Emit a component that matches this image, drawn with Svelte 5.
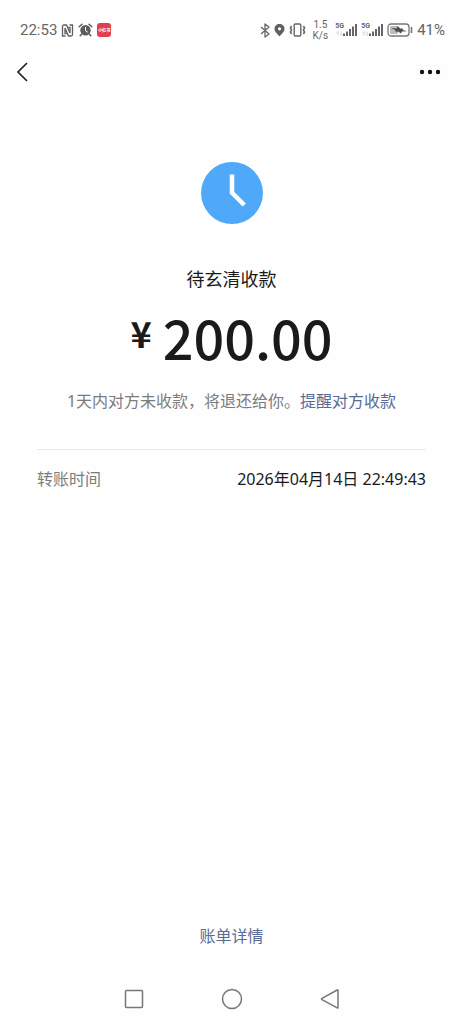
<script>
  const amount = '200.00';
  const time = '2026年04月14日 22:49:43';
</script>

{#snippet signal()}
  <span class="signal">
    <span class="gen">5G</span>
    <svg width="22" height="14" viewBox="0 0 22 14" aria-hidden="true">
      <path d="M3 8.500v4M1.500 10L3 8.500M6 8.500v4L7.500 11" stroke="#d0d0d0" stroke-width="1" fill="none" />
      <path d="M9 10.500V13M12 8.500V13M15 6v7M18 3.500V13M21 1v12" stroke="#666" stroke-width="2" fill="none" />
    </svg>
  </span>
{/snippet}

<div class="screen">
  <header class="status">
    <div class="group left">
      <span class="clock">22:53</span>
      <svg width="13" height="13" viewBox="0 0 13 13" aria-label="NFC">
        <path d="M4.500 12H1.500V2.500q0-1.500 1.500-1.500h2.500L9 9V3.500H7.500M8.500 1h3v9.500q0 1.500-1.500 1.500H7.500L4 4v5.500h1.500" fill="none" stroke="#606060" stroke-width="1.300" />
      </svg>
      <svg width="15" height="14" viewBox="0 0 15 14" aria-label="闹钟">
        <path d="M1.200 3.800L4 1.200M13.800 3.800L11 1.200M3.800 11L2.200 12.800M11.200 11l1.600 1.800" stroke="#5c5c5c" stroke-width="1.500" stroke-linecap="round" />
        <circle cx="7.500" cy="7.200" r="5.200" fill="#5c5c5c" />
        <path d="M7.500 4v3.700l2.300 1.500" fill="none" stroke="#fff" stroke-width="1" />
      </svg>
      <span class="app">小红书</span>
    </div>
    <div class="group right">
      <svg width="10" height="15" viewBox="0 0 10 15" aria-label="蓝牙">
        <path d="M1 4l8 7-4 3V1l4 3-8 7" fill="none" stroke="#666" stroke-width="1.300" stroke-linejoin="round" />
      </svg>
      <svg width="11" height="14" viewBox="0 0 11 14" aria-label="定位">
        <path fill-rule="evenodd" d="M5.500 1C2.700 1 .5 3.100.5 5.800.5 9 3.500 11 5.500 13.500 7.500 11 10.500 9 10.500 5.800 10.500 3.100 8.300 1 5.500 1zm0 3.200a1.600 1.600 0 1 1 0 3.200 1.600 1.600 0 0 1 0-3.200z" fill="#606060" />
      </svg>
      <svg width="17" height="14" viewBox="0 0 17 14" aria-label="振动">
        <rect x="5.200" y="1" width="6.600" height="12" rx="1.200" fill="none" stroke="#666" stroke-width="1.400" />
        <path d="M2.600 3L1.400 5l1.200 2-1.200 2 1.200 2M14.400 3l1.200 2-1.200 2 1.200 2-1.200 2" fill="none" stroke="#666" stroke-width="1.500" />
      </svg>
      <span class="speed"><span>1.5</span><span>K/s</span></span>
      {@render signal()}
      {@render signal()}
      <svg class="battery" width="26" height="14" viewBox="0 0 26 14" aria-label="电量">
        <rect x="1" y="1" width="21" height="12" rx="3" fill="none" stroke="#777" stroke-width="1.300" />
        <rect x="3" y="3" width="8" height="8" rx="1" fill="#bcbcbc" />
        <path d="M4 5l5.500.6L10.500 3l3 2.800 1.500-.8 1 2 4 1.200-5 .2-1 2-3-2-2 .7-1-2z" fill="#4e4e4e" />
        <path d="M24.500 4v6" stroke="#777" stroke-width="1.600" />
      </svg>
      <span class="percent">41%</span>
    </div>
  </header>

  <nav class="top">
    <button aria-label="返回">
      <svg width="14" height="22" viewBox="0 0 14 22"><path d="M12 2L3 11l9 9" fill="none" stroke="#222" stroke-width="1.700" /></svg>
    </button>
    <button aria-label="更多">
      <svg width="22" height="6" viewBox="0 0 22 6" fill="#111"><circle cx="3" cy="3" r="2.200" /><circle cx="11" cy="3" r="2.200" /><circle cx="19" cy="3" r="2.200" /></svg>
    </button>
  </nav>

  <main>
    <svg class="pending" width="62" height="62" viewBox="0 0 62 62" aria-hidden="true">
      <circle cx="31" cy="31" r="31" fill="#50a9f8" />
      <path d="M31 12.500v18.300L43.300 43" fill="none" stroke="#fff" stroke-width="4.500" />
    </svg>
    <h1>待玄清收款</h1>
    <p class="amount"><span class="yen">¥</span><span>{amount}</span></p>
    <p class="hint">1天内对方未收款，将退还给你。<a href="#remind">提醒对方收款</a></p>
    <dl>
      <dt>转账时间</dt>
      <dd>{time}</dd>
    </dl>
    <a class="bill" href="#bill">账单详情</a>
  </main>

  <footer>
    <button aria-label="最近任务">
      <svg width="22" height="22" viewBox="0 0 22 22"><rect x="2.500" y="2.500" width="17" height="17" rx="1" /></svg>
    </button>
    <button aria-label="主页">
      <svg width="22" height="22" viewBox="0 0 22 22"><circle cx="11" cy="11" r="9.500" /></svg>
    </button>
    <button aria-label="后退">
      <svg width="22" height="22" viewBox="0 0 22 22"><path d="M19 2.500v17q0 .8-.8.400L3 11.600q-.9-.6 0-1.200L18.200 2q.8-.3.800.5z" /></svg>
    </button>
  </footer>
</div>

<style>
  :global(body) {
    margin: 0;
    background: #fefefe;
  }

  .screen {
    display: flex;
    flex-direction: column;
    min-height: 100vh;
    color: #1a1a1a;
    font-family: "Noto Sans", "Noto Sans CJK SC", sans-serif;
    font-size: 16px;
    line-height: 24px;
  }

  svg {
    display: block;
    flex: none;
  }

  button {
    display: flex;
    padding: 0;
    border: 0;
    background: none;
    cursor: pointer;
  }

  a {
    color: #576b95;
    text-decoration: none;
  }

  h1,
  p,
  dl,
  dd {
    margin: 0;
  }

  .status {
    display: flex;
    justify-content: space-between;
    align-items: center;
    height: 60px;
    padding: 0 18px 0 20px;
    color: #666;
    font-family: Roboto, sans-serif;
  }

  .group {
    display: flex;
    align-items: center;
    gap: 4px;
  }

  .clock,
  .percent {
    font-size: 15px;
  }

  .app {
    width: 14px;
    border-radius: 3px;
    background: #e0404c;
    color: #fff;
    font-family: "Noto Sans CJK SC", sans-serif;
    font-size: 4px;
    font-weight: 700;
    line-height: 14px;
    text-align: center;
  }

  .speed {
    display: flex;
    flex-direction: column;
    align-items: center;
    margin: 0 3px;
    font-size: 10px;
    line-height: 11px;
  }

  .signal {
    display: grid;
  }

  .signal > * {
    grid-area: 1 / 1;
  }

  .gen {
    font-size: 7px;
    font-weight: 700;
    line-height: 7px;
  }

  .top {
    display: flex;
    justify-content: space-between;
    align-items: center;
    height: 24px;
    padding: 0 22px 0 15px;
  }

  main {
    display: flex;
    flex: 1;
    flex-direction: column;
    align-items: center;
    padding: 78px 37px 0;
  }

  h1 {
    margin-top: 40px;
    font-size: 18px;
    font-weight: 400;
    line-height: 30px;
  }

  .amount {
    display: flex;
    align-items: flex-start;
    gap: 11px;
    margin-top: 13px;
    font-family: "Noto Sans CJK SC", sans-serif;
    font-size: 54px;
    font-weight: 500;
    line-height: 60px;
  }

  .yen {
    font-size: 36px;
    font-weight: 700;
    line-height: 50px;
  }

  .hint {
    margin-top: 22px;
    color: #7c7c7c;
    white-space: nowrap;
  }

  dl {
    display: flex;
    justify-content: space-between;
    align-self: stretch;
    margin-top: 36px;
    padding-top: 17px;
    border-top: 1px solid #e8e8e8;
  }

  dt {
    color: #7c7c7c;
  }

  .bill {
    margin-top: auto;
  }

  footer {
    display: flex;
    justify-content: center;
    gap: 76px;
    padding: 40px 0 14px;
  }

  footer svg {
    fill: none;
    stroke: #777;
    stroke-width: 1.5px;
  }
</style>
